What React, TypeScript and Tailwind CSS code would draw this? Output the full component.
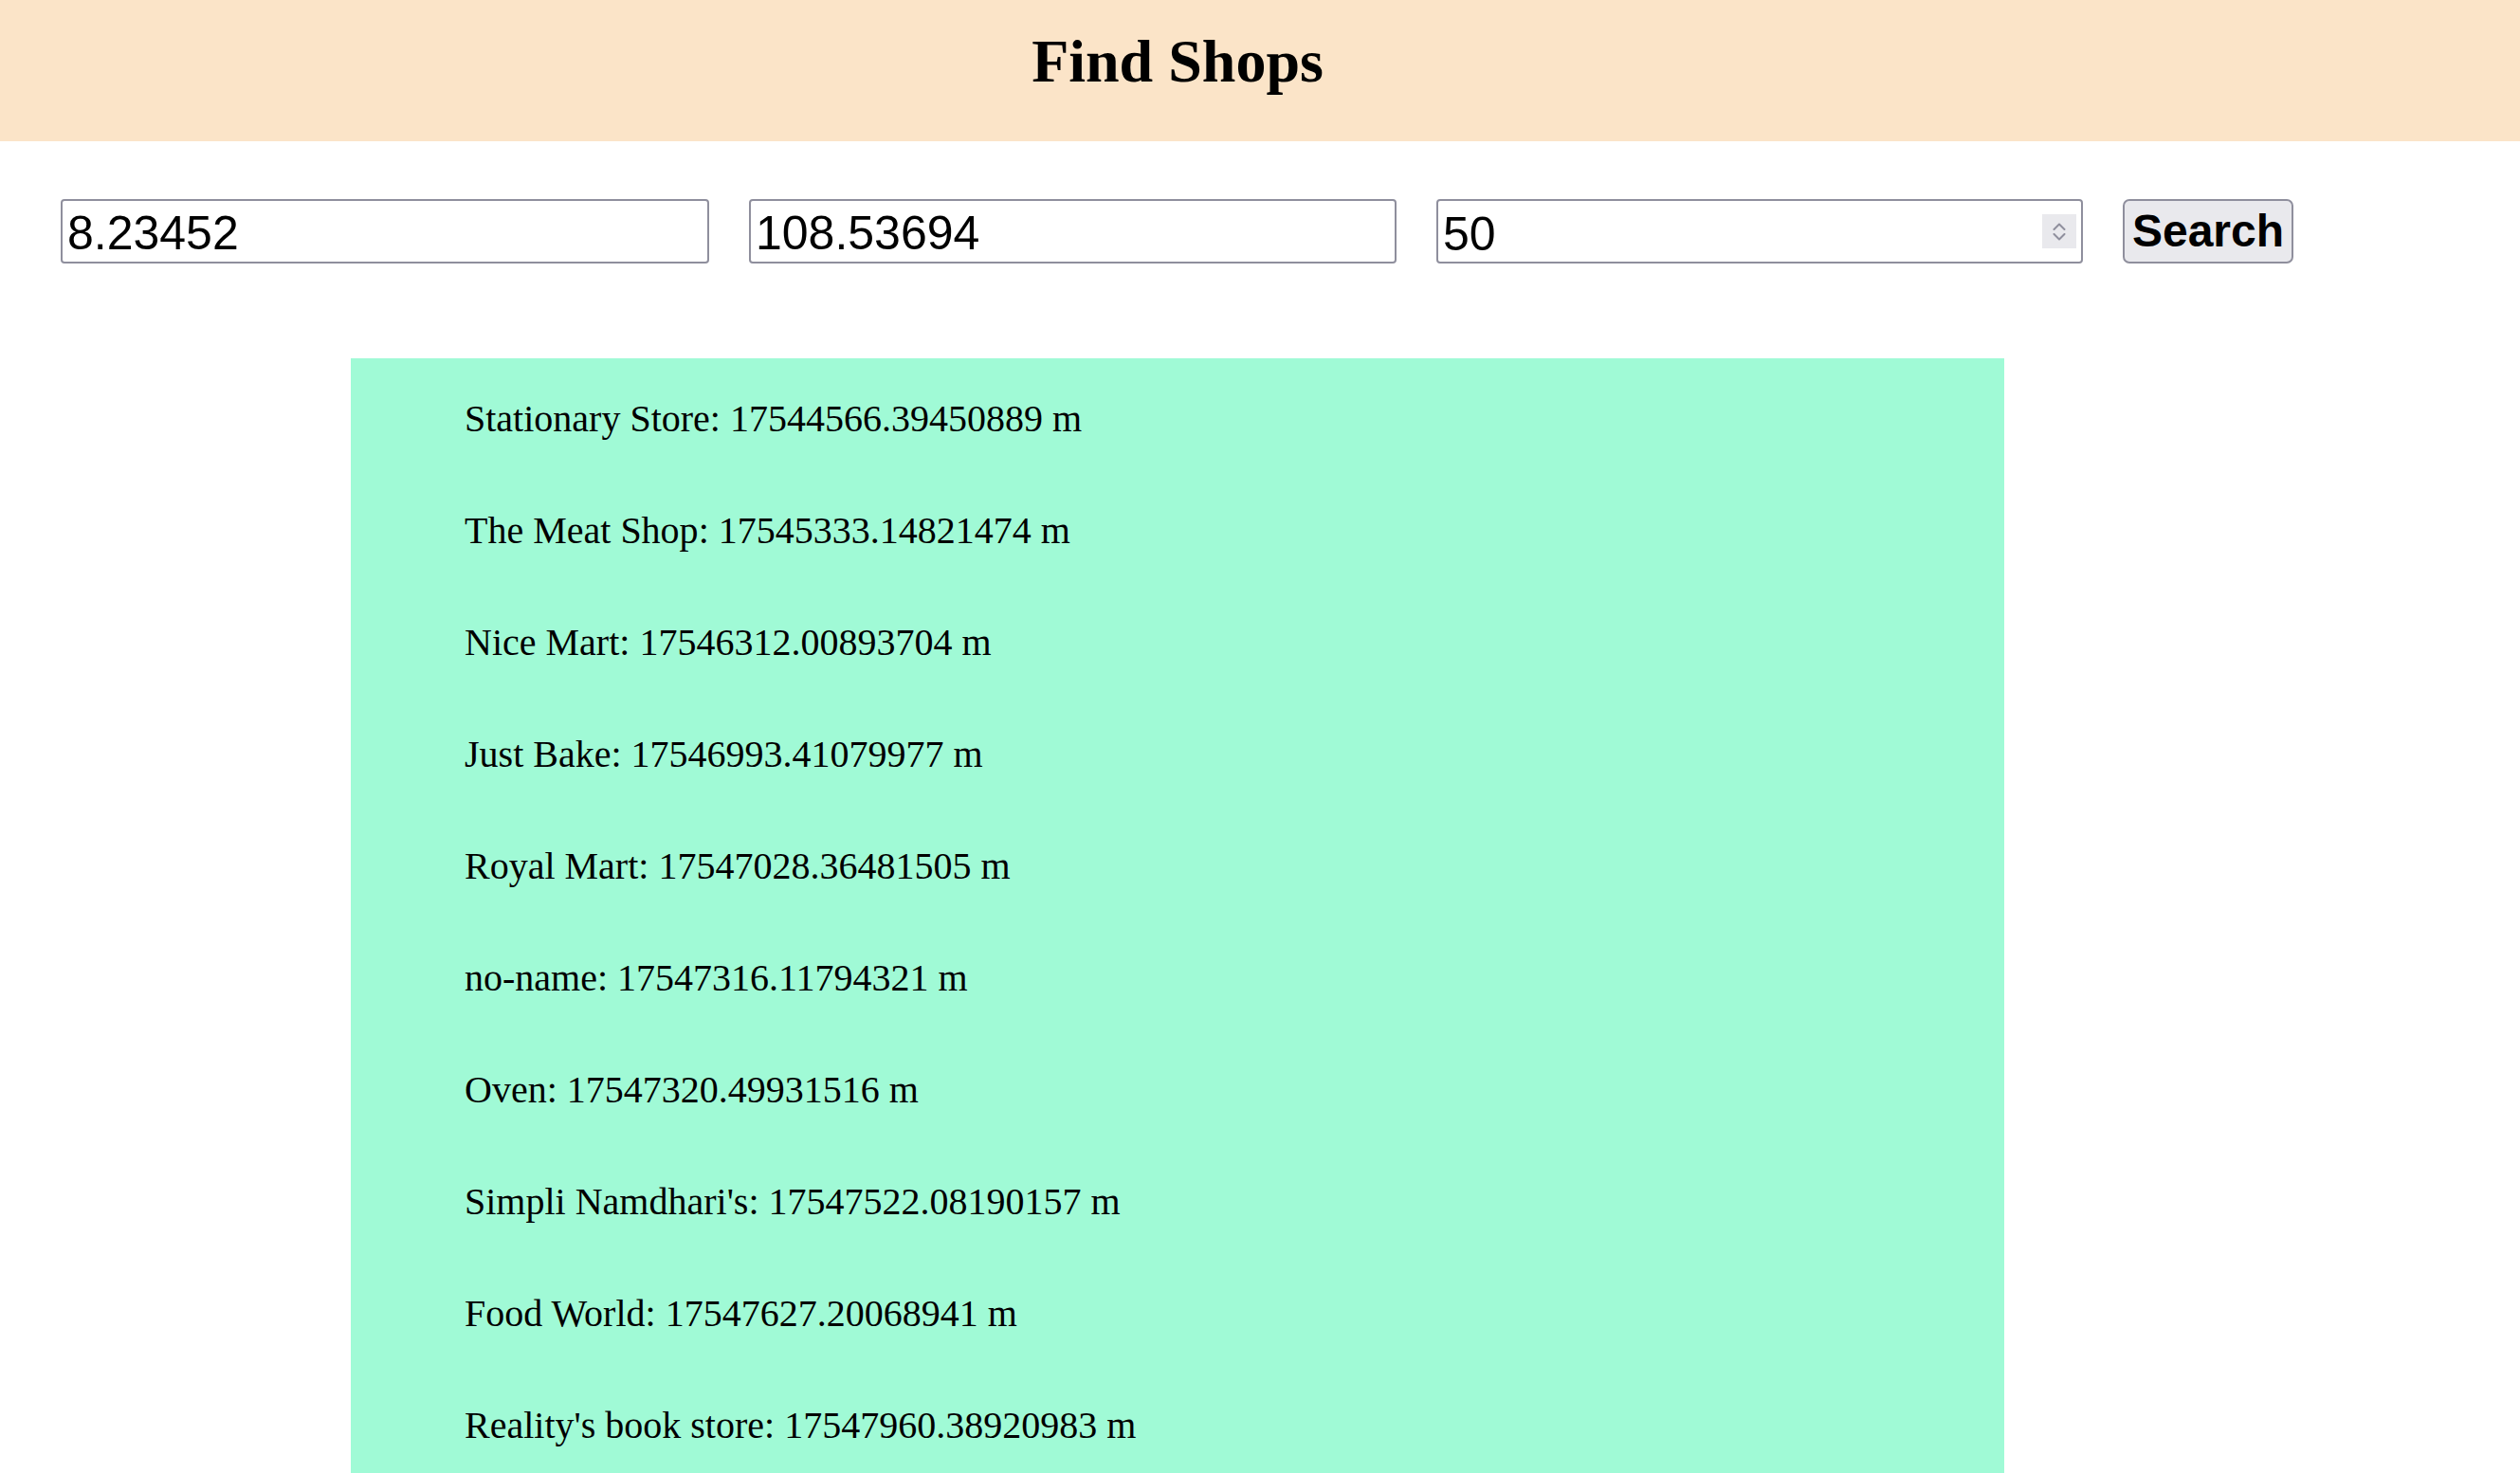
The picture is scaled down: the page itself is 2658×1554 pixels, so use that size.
import React from "react";

const shops: [string, string][] = [
  ["Stationary Store", "17544566.39450889"],
  ["The Meat Shop", "17545333.14821474"],
  ["Nice Mart", "17546312.00893704"],
  ["Just Bake", "17546993.41079977"],
  ["Royal Mart", "17547028.36481505"],
  ["no-name", "17547316.11794321"],
  ["Oven", "17547320.49931516"],
  ["Simpli Namdhari's", "17547522.08190157"],
  ["Food World", "17547627.20068941"],
  ["Reality's book store", "17547960.38920983"],
];

function Spinner() {
  return (
    <div className="flex h-[36px] w-[36px] flex-col items-center justify-center gap-[3px] bg-[#e9e9ed]">
      <svg width="14" height="8" viewBox="0 0 14 8" fill="none">
        <path d="M1.5 7 L7 1.5 L12.5 7" stroke="#8f8f9d" strokeWidth="2" strokeLinecap="round" strokeLinejoin="round" />
      </svg>
      <svg width="14" height="8" viewBox="0 0 14 8" fill="none">
        <path d="M1.5 1 L7 6.5 L12.5 1" stroke="#8f8f9d" strokeWidth="2" strokeLinecap="round" strokeLinejoin="round" />
      </svg>
    </div>
  );
}

export default function App() {
  const inputCls =
    "h-[68px] border-2 border-[#8f8f9d] rounded-[4px] bg-white pl-[5px] pr-[4px] pt-[5px] text-[50px] text-black outline-none font-['Liberation_Sans',Arial,sans-serif]";
  return (
    <div className="h-[1554px] w-full overflow-hidden bg-white">
      <header className="h-[149px] bg-[#fbe4c8]">
        <div className="ml-[370px] w-[1744px] pt-[29px] text-center">
          <h1 className="text-[64px] font-bold leading-[71px] text-black font-['Liberation_Serif','Times_New_Roman',serif]">
            Find Shops
          </h1>
        </div>
      </header>

      <div className="mt-[61px] flex h-[68px] items-center gap-[42px] pl-[64px]">
        <input className={`${inputCls} w-[684px]`} defaultValue="8.23452" />
        <input className={`${inputCls} w-[683px]`} defaultValue="108.53694" />
        <div className="flex h-[68px] w-[682px] items-center rounded-[4px] border-2 border-[#8f8f9d] bg-white pl-[5px] pr-[5px]">
          <input
            className="h-full min-w-0 flex-1 bg-white pt-[5px] text-[50px] text-black outline-none font-['Liberation_Sans',Arial,sans-serif]"
            defaultValue="50"
          />
          <Spinner />
        </div>
        <button className="h-[68px] w-[180px] rounded-[7px] border-2 border-[#8f8f9d] bg-[#e9e9ed] pb-[1px] text-center text-[48px] font-bold leading-[56px] text-black font-['Liberation_Sans',Arial,sans-serif]">
          Search
        </button>
      </div>

      <div className="ml-[370px] mt-[100px] w-[1744px] bg-[#a0fad6] pt-[5px] pl-[120px] pb-[40px]">
        {shops.map(([name, dist]) => (
          <div
            key={name}
            className="h-[118px] text-[40px] leading-[118px] text-black font-['Liberation_Serif','Times_New_Roman',serif] whitespace-nowrap"
          >
            {name}: {dist} m
          </div>
        ))}
      </div>
    </div>
  );
}
